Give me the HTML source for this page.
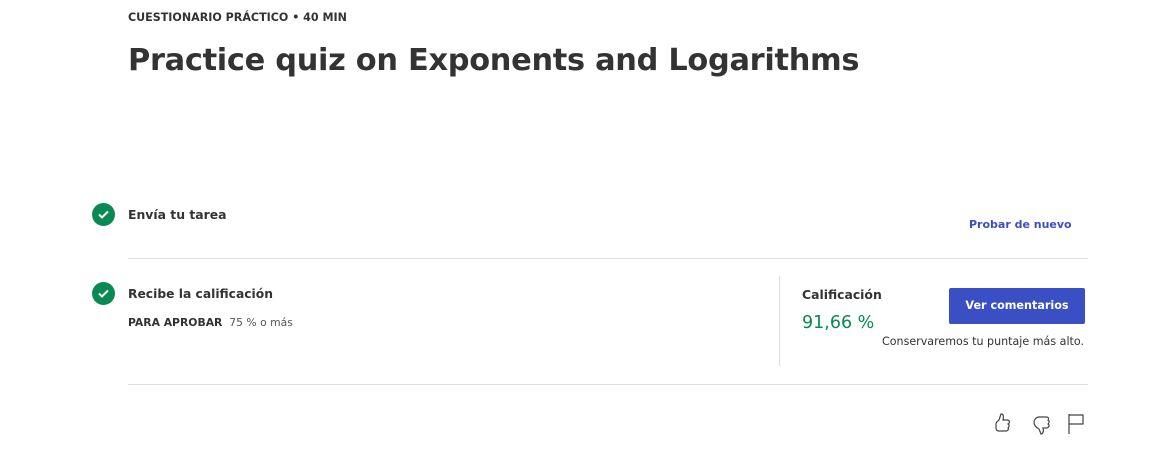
<!DOCTYPE html>
<html><head><meta charset="utf-8"><style>
body{margin:0;width:1173px;height:457px;background:#fff;font-family:"DejaVu Sans","Liberation Sans",sans-serif;color:#333;position:relative;overflow:hidden}
.a{position:absolute;white-space:nowrap}
.chk{position:absolute;width:23px;height:23px;border-radius:50%;background:#0a8a53}
.line{position:absolute;height:1px;background:#ddd;left:128px;width:960px}
</style></head><body>
<div class="a" style="left:128px;top:11px;font-size:11.1px;font-weight:bold;color:#333">CUESTIONARIO PRÁCTICO • 40 MIN</div>
<div class="a" style="left:128px;top:43px;font-size:30.4px;font-weight:bold;color:#333;letter-spacing:-0.3px">Practice quiz on Exponents and Logarithms</div>

<div class="chk" style="left:92px;top:203px"><svg width="23" height="23"><path d="M7 11.5l3 3 6-6" fill="none" stroke="#fff" stroke-width="2"/></svg></div>
<div class="a" style="left:128px;top:207px;font-size:12.4px;font-weight:bold">Envía tu tarea</div>
<div class="a" style="left:969px;top:218px;font-size:11px;font-weight:bold;color:#3a4fc4">Probar de nuevo</div>
<div class="line" style="top:258px"></div>

<div class="chk" style="left:92px;top:282px"><svg width="23" height="23"><path d="M7 11.5l3 3 6-6" fill="none" stroke="#fff" stroke-width="2"/></svg></div>
<div class="a" style="left:128px;top:287px;font-size:12.3px;font-weight:bold">Recibe la calificación</div>
<div class="a" style="left:128px;top:316px;font-size:10.8px"><b>PARA APROBAR</b>&nbsp; <span style="color:#555">75 % o más</span></div>
<div style="position:absolute;left:779px;top:276px;width:1px;height:90px;background:#ddd"></div>
<div class="a" style="left:802px;top:287px;font-size:12.4px;font-weight:bold">Calificación</div>
<div class="a" style="left:802px;top:313px;font-size:17.5px;color:#0a8a53">91,66 %</div>
<div class="a" style="left:949px;top:288px;width:136px;height:36px;background:#3a4fc4;border-radius:2px;color:#fff;font-size:11.2px;font-weight:bold;text-align:center;line-height:36px">Ver comentarios</div>
<div class="a" style="left:882px;top:335px;font-size:11.1px;color:#333">Conservaremos tu puntaje más alto.</div>
<div class="line" style="top:384px"></div>

<svg class="a" style="left:990px;top:410px" width="100" height="28" fill="none" stroke="#444" stroke-width="1.2">
<path d="M6 14c0-2 2-3 3-4l2-6c2 0 3 1 2 6h4c3 0 3 3 1 4 2 1 1 3 0 4 1 1 0 3-2 3H9c-2 0-3-1-3-3z"/>
<path d="M44 12c0-2 2-5 5-5h7c3 0 3 2 2 3 2 1 1 3 0 4 2 1 1 3-1 4h-4c1 3 0 6-2 6l-2-5c-2-1-5-3-5-7z"/>
<path d="M79 4v20M79 5h14v9H79"/>
</svg>
</body></html>
